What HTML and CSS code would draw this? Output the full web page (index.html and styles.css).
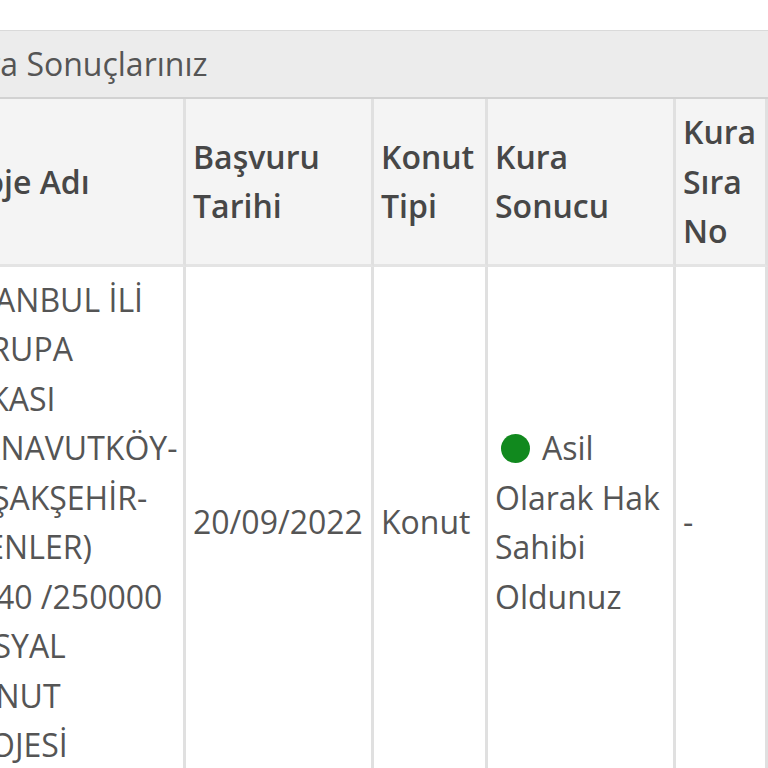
FILE: index.html
```html
<!DOCTYPE html>
<html lang="tr">
<head>
<meta charset="utf-8">
<title>Kura Sonuçlarınız</title>
<link rel="stylesheet" href="styles.css">
</head>
<body>
<div class="page">
  <div class="panel">
    <div class="panel-title">Kura Sonuçlarınız</div>
    <table class="results">
      <thead>
        <tr>
          <th class="c-name">Proje Adı</th>
          <th class="c-date">Başvuru Tarihi</th>
          <th class="c-type">Konut Tipi</th>
          <th class="c-result">Kura Sonucu</th>
          <th class="c-order">Kura Sıra No</th>
        </tr>
      </thead>
      <tbody>
        <tr>
          <td>İSTANBUL İLİ AVRUPA YAKASI (ARNAVUTKÖY-BAŞAKŞEHİR-ESENLER) 1&nbsp;240 /250000 SOSYAL KONUT PROJESİ</td>
          <td>20/09/2022</td>
          <td>Konut</td>
          <td><span class="dot"></span>Asil Olarak Hak Sahibi Oldunuz</td>
          <td>-</td>
        </tr>
      </tbody>
    </table>
  </div>
</div>
</body>
</html>
```
FILE: styles.css
```css
html, body {
  margin: 0;
  padding: 0;
  background: #ffffff;
  overflow: hidden;
}

body {
  font-family: "Open Sans", "Noto Sans", sans-serif;
  color: #555555;
}

.page {
  padding-top: 30px;
  margin-left: -57px;
}

.panel {
  border-top: 1px solid #dadada;
}

.panel-title {
  background: #ececec;
  height: 66px;
  line-height: 66px;
  padding-left: 5px;
  font-size: 32px;
  color: #555555;
  border-bottom: 2px solid #d2d2d2;
}

.results {
  border-collapse: separate;
  border-spacing: 0;
  table-layout: fixed;
  width: 825px;
}

.results th,
.results td {
  box-sizing: border-box;
  padding: 8px 5px 8px 7px;
  font-size: 32px;
  line-height: 49.5px;
  text-align: left;
  vertical-align: middle;
  border-right: 3px solid #e0e0e0;
  border-bottom: 3px solid #e4e4e4;
}

.results th:first-child,
.results td:first-child {
  border-left: 3px solid #e0e0e0;
  padding-left: 5px;
}

.results th {
  background: #f4f4f4;
  font-weight: 600;
  color: #474747;
}

.results td {
  background: #ffffff;
  font-weight: 400;
  color: #555555;
}

.c-name { width: 243px; }
.c-date { width: 188px; }
.c-type { width: 114px; }
.c-result { width: 188px; }
.c-order { width: 92px; }

.dot {
  display: inline-block;
  width: 29px;
  height: 29px;
  border-radius: 50%;
  background: #11891e;
  margin-left: 6px;
  margin-right: 12px;
  vertical-align: -3px;
}
```
